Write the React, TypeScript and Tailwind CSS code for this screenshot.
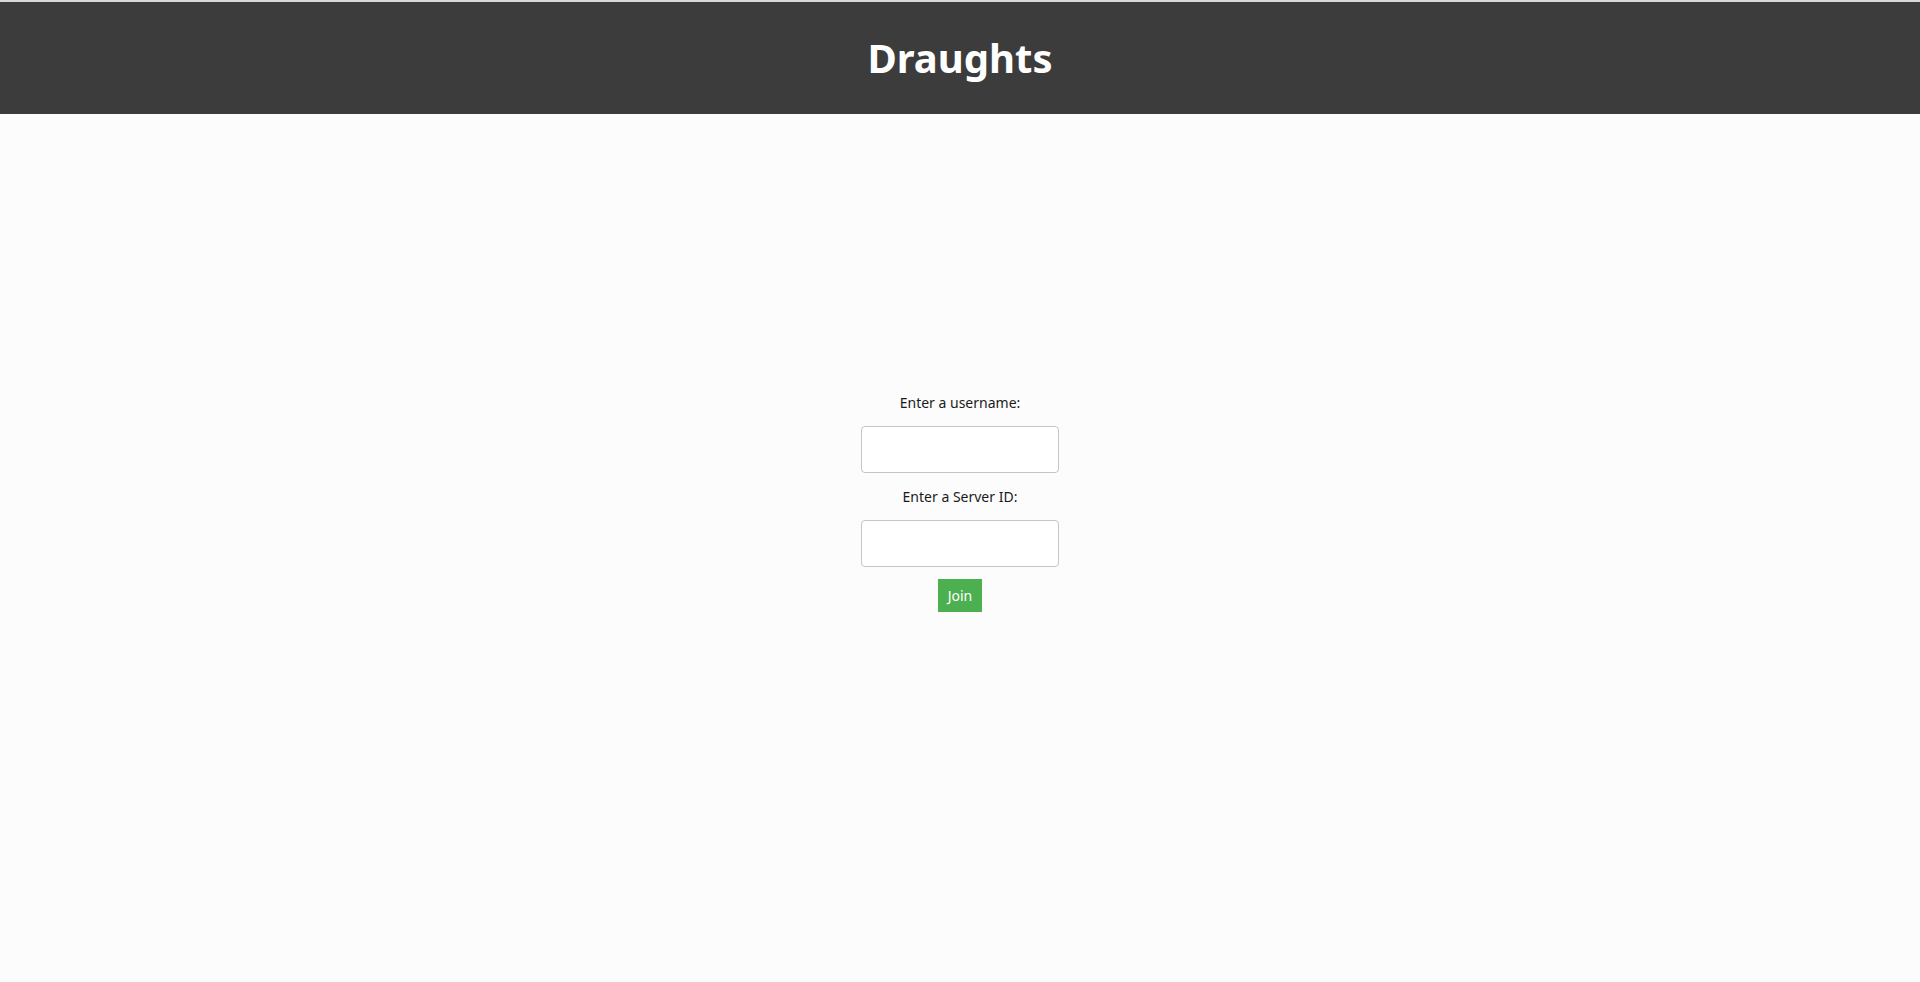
import React from 'react'

const Field = ({ label }: { label: string }) => (
    <>
        <label className="text-[14px] leading-[20px] text-[#1a1a1a]">{label}</label>
        <input
            type="text"
            className="mt-[13px] w-[198px] h-[47px] rounded-[4px] border border-[#c9c4bf] bg-white px-2 outline-none"
        />
    </>
)

export default function App() {
    return (
        <div
            className="min-h-[982px] bg-[#fcfcfc] border-t-2 border-[#d9d9d9]"
            style={{ fontFamily: '"Noto Sans", "DejaVu Sans", sans-serif' }}
        >
            <header className="h-[112px] bg-[#3c3c3c] flex items-center justify-center">
                <h1 className="text-[40px] font-bold text-white">Draughts</h1>
            </header>
            <main className="flex flex-col items-center pt-[279px]">
                <Field label="Enter a username:" />
                <div className="h-[14px]" />
                <Field label="Enter a Server ID:" />
                <button className="mt-[12px] w-[44px] h-[33px] bg-[#4caf50] text-white text-[14px]">
                    Join
                </button>
            </main>
        </div>
    )
}
